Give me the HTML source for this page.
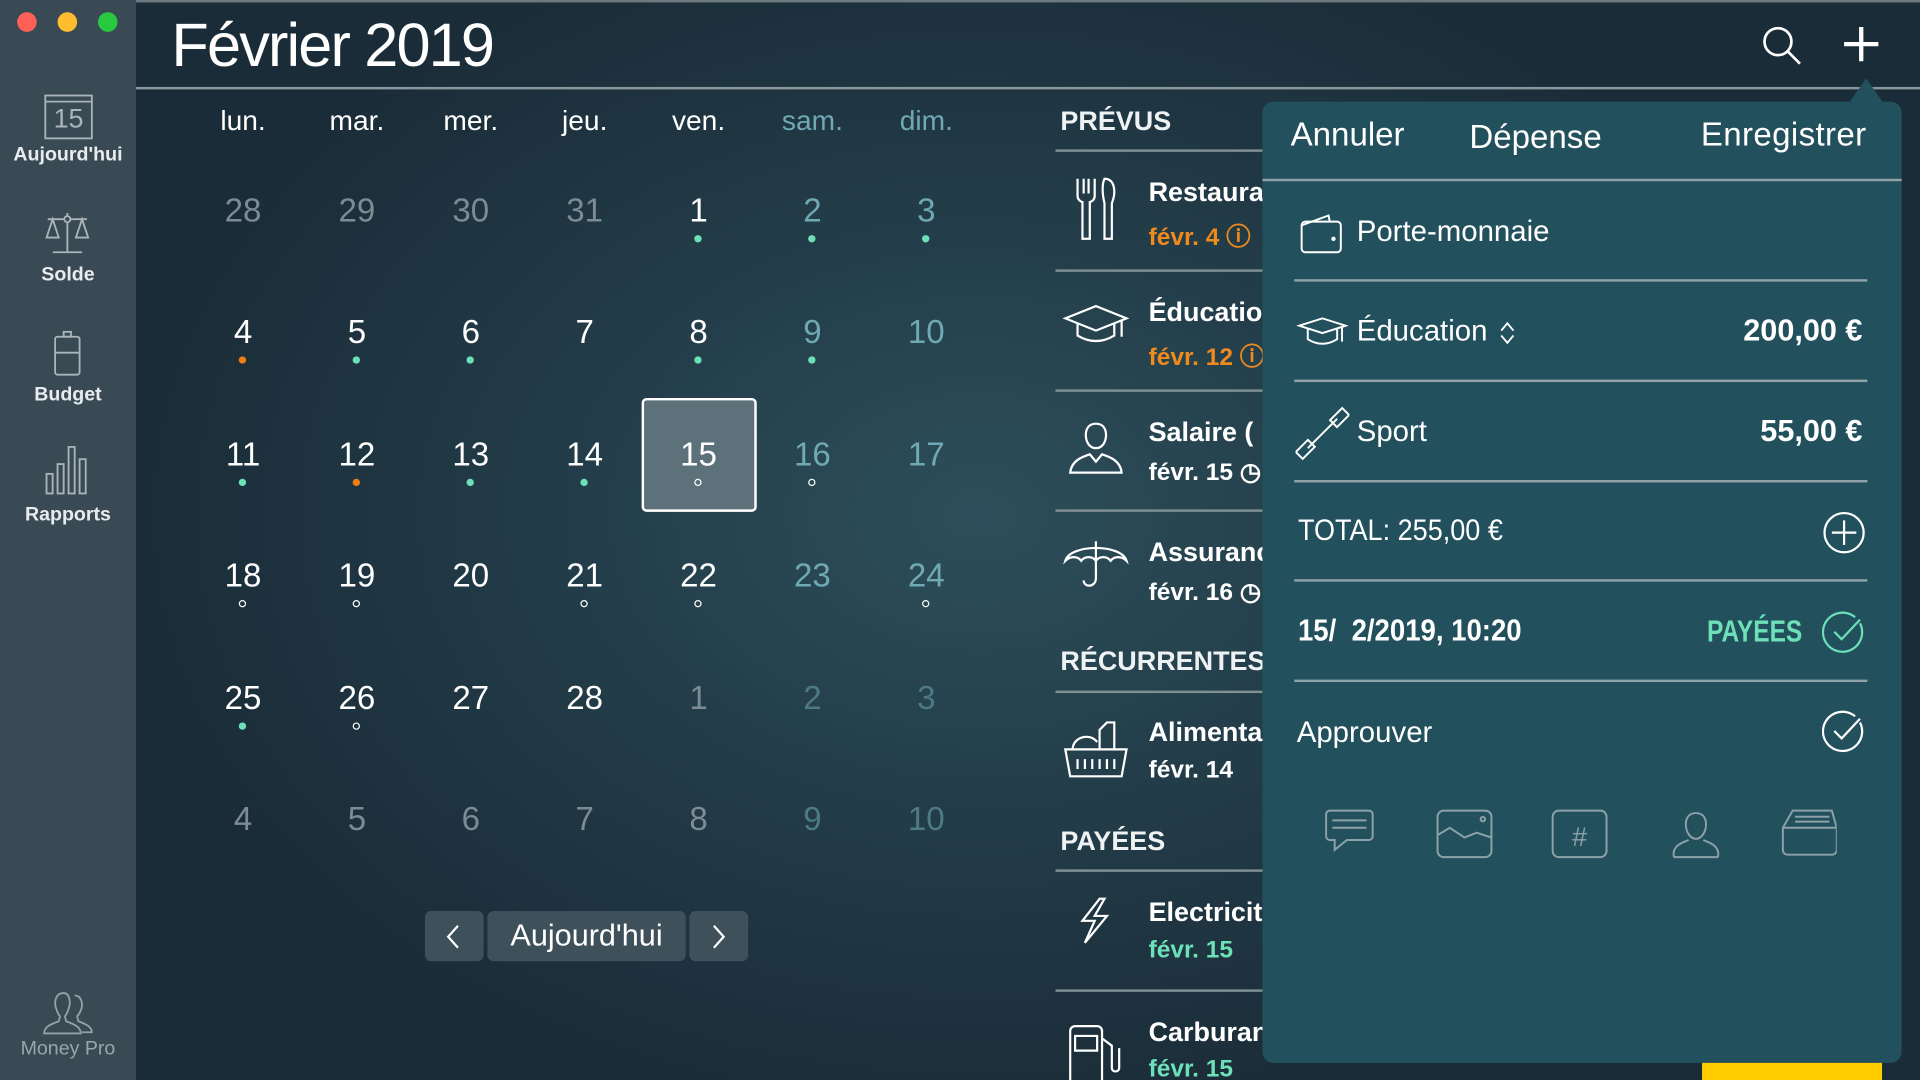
<!DOCTYPE html>
<html><head><meta charset="utf-8"><style>
*{margin:0;padding:0;box-sizing:border-box}
html,body{width:1920px;height:1080px;overflow:hidden;background:#16262f}
#w{position:absolute;left:0;top:0;width:1568px;height:882px;transform:scale(1.22449);transform-origin:0 0;font-family:"Liberation Sans",sans-serif;color:#fff;overflow:hidden;
background:radial-gradient(ellipse 700px 500px at 800px 420px,#2d4f5a 0%,#233e4a 45%,#1a2c38 100%);}
.a{position:absolute}
.sb{left:0;top:0;width:111px;height:882px;background:#3a4a55}
.tl{width:16px;height:16px;border-radius:50%;top:10px}
.sl{width:111px;text-align:center;font-size:16px;font-weight:bold;color:#e8ecee}
.wd{width:93px;text-align:center;font-size:23px;top:85px}
.dn{width:93px;text-align:center;font-size:27px}
.dot{width:6px;height:6px;border-radius:50%}
.g{color:#7d8b92}.t{color:#6fa9b4}.tg{color:#4d7a85}
.sec{left:866px;font-size:22px;font-weight:bold;color:#eef2f3}
.ln{height:2px;background:#7f9095}
.it{left:938px;font-size:22px;font-weight:bold;white-space:nowrap}
.pl{height:2px;background:#8fa3a8;left:1057px;width:468px}
.pr{left:1060px;font-size:24px}
.btn{background:#3e5059;border-radius:5px;top:744px;height:41px}
</style></head><body><div id="w">
<div class="a" style="left:0;top:0;width:1568px;height:2px;background:#6c7a80"></div>
<div class="a sb"></div>
<div class="a tl" style="left:14px;background:#fe5f57"></div>
<div class="a tl" style="left:47px;background:#febc2e"></div>
<div class="a tl" style="left:80px;background:#28c840"></div>
<svg class="a" style="left:36px;top:77px" width="40" height="38" viewBox="0 0 40 38" fill="none" stroke="#aab4b9" stroke-width="1.5"><rect x="1" y="1" width="38" height="35"/><line x1="1" y1="6" x2="39" y2="6"/></svg>
<div class="a" style="left:36px;top:84px;width:40px;text-align:center;font-size:22px;color:#aab4b9">15</div>
<div class="a sl" style="top:118px">Aujourd'hui</div>
<svg class="a" style="left:35px;top:170px" width="40" height="40" viewBox="0 0 40 40" fill="none" stroke="#aab4b9" stroke-width="1.5"><line x1="20" y1="4" x2="20" y2="36"/><line x1="8" y1="36" x2="32" y2="36"/><line x1="4" y1="9" x2="36" y2="9"/><circle cx="20" cy="9" r="2.5" fill="#3a4a55"/><path d="M8 9 L3 24 H13 Z M32 9 L27 24 H37 Z"/></svg>
<div class="a sl" style="top:216px">Solde</div>
<svg class="a" style="left:42px;top:270px" width="26" height="38" viewBox="0 0 26 38" fill="none" stroke="#aab4b9" stroke-width="1.5"><rect x="10" y="1" width="6" height="4"/><rect x="3" y="5" width="20" height="31" rx="2"/><line x1="3" y1="18" x2="23" y2="18"/></svg>
<div class="a sl" style="top:314px">Budget</div>
<svg class="a" style="left:36px;top:363px" width="40" height="42" viewBox="0 0 40 42" fill="none" stroke="#aab4b9" stroke-width="1.5"><rect x="2" y="24" width="5" height="16"/><rect x="11" y="16" width="5" height="24"/><rect x="20" y="2" width="5" height="38"/><rect x="29" y="12" width="5" height="28"/></svg>
<div class="a sl" style="top:412px">Rapports</div>
<svg class="a" style="left:34px;top:808px" width="44" height="40" viewBox="0 0 44 40" fill="none" stroke="#95a1a7" stroke-width="1.5"><path d="M18 3 c-7 0 -8 8 -6 13 c1 3 2 5 3 6 l-1 4 c-5 2 -12 4 -12 10 h30 c0 -6 -7 -8 -12 -10 l-1 -4 c1 -1 2 -3 3 -6 c2 -5 1 -13 -4 -13z"/><path d="M27 5 c6 0 7 8 5 12 c-1 3 -2 4 -3 5 l1 4 c5 2 11 4 11 9 h-8"/></svg>
<div class="a sl" style="top:848px;color:#9aa5ab;font-weight:normal">Money Pro</div>
<div class="a" style="left:140px;top:8px;font-size:50px;font-weight:300;letter-spacing:-1.5px">Février 2019</div>
<div class="a ln" style="left:111px;top:71px;width:1457px;background:#8a989d"></div>
<svg class="a" style="left:1438px;top:20px" width="36" height="36" viewBox="0 0 36 36" fill="none" stroke="#fff" stroke-width="2.2"><circle cx="14" cy="14" r="11"/><line x1="22" y1="22" x2="32" y2="32"/></svg>
<svg class="a" style="left:1504px;top:20px" width="32" height="32" viewBox="0 0 32 32" stroke="#fff" stroke-width="3.5"><line x1="16" y1="2" x2="16" y2="30"/><line x1="2" y1="16" x2="30" y2="16"/></svg>
<div class="a wd" style="left:152px">lun.</div><div class="a wd" style="left:245px">mar.</div><div class="a wd" style="left:338px">mer.</div><div class="a wd" style="left:431px">jeu.</div><div class="a wd" style="left:524px">ven.</div><div class="a wd t" style="left:617px">sam.</div><div class="a wd t" style="left:710px">dim.</div>
<div class="a" style="left:524px;top:325px;width:94px;height:93px;background:#5d717b;border:2px solid #fff;border-radius:4px"></div>
<div id="cal"></div>
<div class="a btn" style="left:347px;width:48px"></div>
<div class="a btn" style="left:398px;width:162px;text-align:center;font-size:25px;line-height:41px">Aujourd'hui</div>
<div class="a btn" style="left:563px;width:48px"></div>
<svg class="a" style="left:362px;top:754px" width="16" height="22" viewBox="0 0 16 22" fill="none" stroke="#fff" stroke-width="1.8"><path d="M12 2 L4 11 L12 20"/></svg>
<svg class="a" style="left:579px;top:754px" width="16" height="22" viewBox="0 0 16 22" fill="none" stroke="#fff" stroke-width="1.8"><path d="M4 2 L12 11 L4 20"/></svg>
<div class="a sec" style="top:86px">PRÉVUS</div>
<div class="a ln" style="left:862px;top:122px;width:170px"></div>
<div class="a ln" style="left:862px;top:220px;width:170px"></div>
<div class="a ln" style="left:862px;top:318px;width:170px"></div>
<div class="a ln" style="left:862px;top:416px;width:170px"></div>
<div class="a sec" style="top:527px">RÉCURRENTES</div>
<div class="a ln" style="left:862px;top:564px;width:170px"></div>
<div class="a sec" style="top:674px">PAYÉES</div>
<div class="a ln" style="left:862px;top:710px;width:170px"></div>
<div class="a ln" style="left:862px;top:808px;width:170px"></div>
<div class="a it" style="top:144px">Restaurant</div><div class="a it" style="top:177px;color:#f08a1c;font-size:20px">févr. 4 ⓘ</div>
<div class="a it" style="top:242px">Éducation</div><div class="a it" style="top:275px;color:#f08a1c;font-size:20px">févr. 12 ⓘ</div>
<div class="a it" style="top:340px">Salaire (</div><div class="a it" style="top:373px;font-size:20px">févr. 15 ◷</div>
<div class="a it" style="top:438px">Assurance</div><div class="a it" style="top:471px;font-size:20px">févr. 16 ◷</div>
<div class="a it" style="top:585px">Alimentation</div><div class="a it" style="top:618px;font-size:20px">févr. 14</div>
<div class="a it" style="top:732px">Electricité</div><div class="a it" style="top:765px;color:#6ee0b8;font-size:20px">févr. 15</div>
<div class="a it" style="top:830px">Carburant</div><div class="a it" style="top:862px;color:#6ee0b8;font-size:20px">févr. 15</div>
<svg class="a" style="left:868px;top:140px" width="56" height="742" viewBox="0 0 56 742" fill="none" stroke="#fff" stroke-width="1.8">
<path d="M12 6 v14 a5 5 0 0 0 4 5 v30 h6 v-30 a5 5 0 0 0 4 -5 v-14 M17 6 v12 M21 6 v12 M34 6 c8 0 10 10 6 20 v29 h-6 v-29 c-2 -8 -2 -16 0 -20z"/>
<path d="M2 120 L27 110 L52 120 L27 130 Z M12 124 v10 c10 6 20 6 30 0 v-10 M48 121 v14"/>
<path d="M27 206 c-7 0 -9 6 -8 12 c1 5 4 8 8 8 c4 0 7 -3 8 -8 c1 -6 -1 -12 -8 -12z M6 246 c1 -10 10 -13 16 -15 l5 6 l5 -6 c6 2 15 5 16 15 z"/>
<path d="M2 318 c4 -14 46 -14 50 0 c-4 -4 -10 -4 -13 0 c-3 -4 -9 -4 -12 0 c-3 -4 -9 -4 -12 0 c-3 -4 -9 -4 -13 0z M27 302 v30 c0 8 -10 8 -10 2"/>
<path d="M2 472 h50 l-4 22 h-42 z M8 472 c0 -10 14 -14 20 -6 M30 472 v-16 l6 -6 h6 v22 M12 480 v8 M18 480 v8 M24 480 v8 M30 480 v8 M36 480 v8 M42 480 v8"/>
<path d="M30 594 l-14 18 h10 l-8 18 l18 -22 h-10 l8 -14z"/>
<path d="M6 742 v-40 a4 4 0 0 1 4 -4 h18 a4 4 0 0 1 4 4 v40 M10 706 h18 v12 h-18 z M32 708 l8 6 v18 c0 4 6 4 6 0 v-16"/>
</svg>
<div class="a" style="left:1031px;top:83px;width:522px;height:785px;background:#22505c;border-radius:9px"></div>
<div class="a" style="left:1510px;top:64px;width:0;height:0;border-left:14px solid transparent;border-right:14px solid transparent;border-bottom:20px solid #22505c"></div>
<div class="a" style="left:1054px;top:95px;font-size:27px">Annuler</div>
<div class="a" style="left:1200px;top:97px;font-size:27px">Dépense</div>
<div class="a" style="left:1389px;top:95px;font-size:27px;letter-spacing:0.3px">Enregistrer</div>
<div class="a" style="left:1031px;top:146px;width:522px;height:2px;background:#8fa3a8"></div>
<svg class="a" style="left:1061px;top:172px" width="36" height="36" viewBox="0 0 36 36" fill="none" stroke="#fff" stroke-width="1.6"><path d="M2 12 L24 4 L25 9"/><rect x="2" y="9" width="32" height="25" rx="3"/><circle cx="28" cy="23" r="1" fill="#fff"/></svg>
<div class="a pr" style="left:1108px;top:176px">Porte-monnaie</div>
<div class="a pl" style="top:228px"></div>
<svg class="a" style="left:1059px;top:258px" width="42" height="28" viewBox="0 0 42 28" fill="none" stroke="#fff" stroke-width="1.6"><path d="M2 8 L21 2 L40 8 L21 14 Z M9 11 v8 c8 5 16 5 24 0 v-8 M37 9 v12"/></svg>
<div class="a pr" style="left:1108px;top:257px">Éducation</div>
<svg class="a" style="left:1224px;top:262px" width="14" height="20" viewBox="0 0 14 20" fill="none" stroke="#fff" stroke-width="1.5"><path d="M2 8 L7 2 L12 8 M2 12 L7 18 L12 12"/></svg>
<div class="a" style="right:47px;top:256px;font-size:25px;font-weight:bold">200,00 €</div>
<div class="a pl" style="top:310px"></div>
<svg class="a" style="left:1058px;top:332px" width="44" height="44" viewBox="0 0 44 44" fill="none" stroke="#fff" stroke-width="1.6"><path d="M10 34 L34 10"/><rect x="4" y="28" width="8" height="14" transform="rotate(45 8 35)"/><rect x="32" y="2" width="8" height="14" transform="rotate(45 36 9)"/></svg>
<div class="a pr" style="left:1108px;top:339px">Sport</div>
<div class="a" style="right:47px;top:338px;font-size:25px;font-weight:bold">55,00 €</div>
<div class="a pl" style="top:392px"></div>
<div class="a pr" style="top:420px;transform:scaleX(0.92);transform-origin:0 0">TOTAL: 255,00 €</div>
<svg class="a" style="left:1488px;top:417px" width="36" height="36" viewBox="0 0 36 36" fill="none" stroke="#fff" stroke-width="1.8"><circle cx="18" cy="18" r="16"/><path d="M18 8 v20 M8 18 h20"/></svg>
<div class="a pl" style="top:473px"></div>
<div class="a pr" style="top:501px;font-weight:bold;font-size:25px;transform:scaleX(0.9);transform-origin:0 0;white-space:nowrap">15/&nbsp; 2/2019, 10:20</div>
<div class="a" style="left:1394px;top:502px;font-size:25px;font-weight:bold;color:#6ee0b8;transform:scaleX(0.8);transform-origin:0 0">PAYÉES</div>
<svg class="a" style="left:1488px;top:499px" width="36" height="36" viewBox="0 0 36 36" fill="none" stroke="#6ee0b8" stroke-width="1.8"><path d="M31 10 A16 16 0 1 1 27 5"/><path d="M10 17 L16 23 L31 7"/></svg>
<div class="a pl" style="top:555px"></div>
<div class="a pr" style="left:1059px;top:585px">Approuver</div>
<svg class="a" style="left:1488px;top:580px" width="36" height="36" viewBox="0 0 36 36" fill="none" stroke="#fff" stroke-width="1.8"><path d="M31 10 A16 16 0 1 1 27 5"/><path d="M10 17 L16 23 L31 7"/></svg>
<svg class="a" style="left:1080px;top:658px" width="420" height="46" viewBox="0 0 420 46" fill="none" stroke="#8da2a8" stroke-width="1.6">
<path d="M6 4 h32 a3 3 0 0 1 3 3 v18 a3 3 0 0 1 -3 3 h-18 l-10 8 v-8 h-4 a3 3 0 0 1 -3 -3 v-18 a3 3 0 0 1 3 -3z M8 12 h28 M8 18 h28"/>
<rect x="94" y="4" width="44" height="38" rx="5"/><path d="M94 24 l10 -6 l12 8 l10 -4 l12 4"/><circle cx="131" cy="11" r="1.8"/>
<rect x="188" y="4" width="44" height="38" rx="5"/><text x="210" y="33" text-anchor="middle" font-family="Liberation Sans" font-size="22" fill="#8da2a8" stroke="none">#</text>
<path d="M305 6 c-7 0 -9 6 -8 12 c1 5 4 9 8 9 c4 0 7 -4 8 -9 c1 -6 -1 -12 -8 -12z M287 42 c-2 -10 8 -12 12 -14 M323 42 c2 -10 -8 -12 -12 -14 M287 42 h36"/>
<path d="M384 4 h32 l4 14 v18 a4 4 0 0 1 -4 4 h-36 a4 4 0 0 1 -4 -4 v-18z M376 18 h44 M386 9 h28 M386 13 h28"/>
</svg>
<div class="a" style="left:1390px;top:868px;width:147px;height:20px;background:#ffcc00;border-radius:0 0 6px 6px"></div>
</div>
<script>
var c=document.getElementById('cal'),x=[152,245,338,431,524,617,710],ys=[157,256,356,455,555,654];
var d=[
[["28","g"],["29","g"],["30","g"],["31","g"],["1","",1],["2","t",1],["3","t",1]],
[["4","",2],["5","",1],["6","",1],["7",""],["8","",1],["9","t",1],["10","t"]],
[["11","",1],["12","",2],["13","",1],["14","",1],["15","",3],["16","t",3],["17","t"]],
[["18","",3],["19","",3],["20",""],["21","",3],["22","",3],["23","t"],["24","t",3]],
[["25","",1],["26","",3],["27",""],["28",""],["1","g"],["2","tg"],["3","tg"]],
[["4","g"],["5","g"],["6","g"],["7","g"],["8","g"],["9","tg"],["10","tg"]]];
var h='';
d.forEach(function(r,i){r.forEach(function(e,j){
h+='<div class="a dn '+e[1]+'" style="left:'+x[j]+'px;top:'+ys[i]+'px">'+e[0]+'</div>';
if(e[2]){var s='left:'+(x[j]+43)+'px;top:'+(ys[i]+35)+'px;';
if(e[2]==1)s+='background:#6ee0b8';else if(e[2]==2)s+='background:#f07c12';else s+='border:1.3px solid #fff';
h+='<div class="a dot" style="'+s+'"></div>';}
});});
c.innerHTML=h;
</script>
</body></html>
